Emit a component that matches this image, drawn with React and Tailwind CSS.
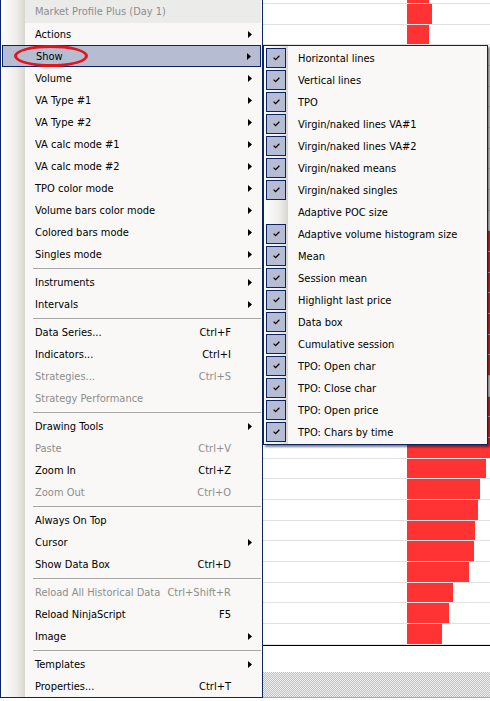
import React from 'react';

const mainItems = [
  { label: 'Actions', sub: true },
  { label: 'Show', sub: true, active: true },
  { label: 'Volume', sub: true },
  { label: 'VA Type #1', sub: true },
  { label: 'VA Type #2', sub: true },
  { label: 'VA calc mode #1', sub: true },
  { label: 'VA calc mode #2', sub: true },
  { label: 'TPO color mode', sub: true },
  { label: 'Volume bars color mode', sub: true },
  { label: 'Colored bars mode', sub: true },
  { label: 'Singles mode', sub: true },
  { sep: true },
  { label: 'Instruments', sub: true },
  { label: 'Intervals', sub: true },
  { sep: true },
  { label: 'Data Series...', key: 'Ctrl+F' },
  { label: 'Indicators...', key: 'Ctrl+I' },
  { label: 'Strategies...', key: 'Ctrl+S', off: true },
  { label: 'Strategy Performance', off: true },
  { sep: true },
  { label: 'Drawing Tools', sub: true },
  { label: 'Paste', key: 'Ctrl+V', off: true },
  { label: 'Zoom In', key: 'Ctrl+Z' },
  { label: 'Zoom Out', key: 'Ctrl+O', off: true },
  { sep: true },
  { label: 'Always On Top' },
  { label: 'Cursor', sub: true },
  { label: 'Show Data Box', key: 'Ctrl+D' },
  { sep: true },
  { label: 'Reload All Historical Data', key: 'Ctrl+Shift+R', off: true },
  { label: 'Reload NinjaScript', key: 'F5' },
  { label: 'Image', sub: true },
  { sep: true },
  { label: 'Templates', sub: true },
  { label: 'Properties...', key: 'Ctrl+T' },
];

const showItems = [
  'Horizontal lines',
  'Vertical lines',
  'TPO',
  'Virgin/naked lines VA#1',
  'Virgin/naked lines VA#2',
  'Virgin/naked means',
  'Virgin/naked singles',
  'Adaptive POC size',
  'Adaptive volume histogram size',
  'Mean',
  'Session mean',
  'Highlight last price',
  'Data box',
  'Cumulative session',
  'TPO: Open char',
  'TPO: Close char',
  'TPO: Open price',
  'TPO: Chars by time',
];

// bar lengths (px from x=407) for each price row of the profile
const bars = [25, 22, 50, 50, 50, 50, 50, 50, 50, 50, 50, 83, 83, 83, 83, 83, 83, 83, 60, 83, 83, 83, 79, 73, 71, 68, 67, 62, 46, 42, 35];

const Arrow = () => (
  <svg width="4" height="7" viewBox="0 0 4 7">
    <polygon points="0,0 4,3.5 0,7" fill="#000" />
  </svg>
);

const Check = () => (
  <svg width="7" height="6" viewBox="0 0 7 6">
    <path d="M0.6 2.6 L2.6 4.6 L6.4 0.8" fill="none" stroke="#000" strokeWidth="1.3" />
  </svg>
);

const Chart = () => (
  <div className="flex flex-col w-[490px]">
    <div className="h-[4px] border-b border-[#e2e2e2] flex">
      <div className="w-[407px]" />
      <div className="bg-[#ff3333] w-[22px]" />
    </div>
    {bars.map((w, i) => (
      <div key={i} className="h-[20.68px] border-b border-[#e2e2e2] flex last:border-b-0">
        <div className="w-[407px] shrink-0" />
        <div className="bg-[#ff3333] shrink-0" style={{ width: w }} />
      </div>
    ))}
    <div className="h-px bg-black" />
    <div className="h-[26px]" />
    <div className="h-[25px] bg-[image:repeating-conic-gradient(#c2c2c2_0%_25%,#eeeeee_0%_50%)] bg-[length:2px_2px]" />
    <div className="h-px bg-[#a8a8a8]" />
    <div className="flex-1 h-[4px] bg-[#d4d0c8]" />
  </div>
);

const MainMenu = () => (
  <div className="absolute left-0 top-0 w-[263px] border-x border-b border-[#0a246a] bg-[#f9f8f6] bg-[image:linear-gradient(to_right,#fdfdfd_0px,#efeeeb_15px,#d9d7d1_24px,#f9f8f6_24px)] flex flex-col">
    <div className="h-[23px] mx-px flex">
      <div className="ml-[23px] flex-1 bg-[#ebebea] flex items-center pl-[10px] text-[#8d8d8d]">
        Market Profile Plus (Day 1)
      </div>
    </div>
    {mainItems.map((it, i) =>
      it.sep ? (
        <div key={i} className="h-[6px] mx-px flex items-center">
          <div className="ml-[31px] flex-1 h-px bg-[#a6a6a6]" />
        </div>
      ) : (
        <div
          key={i}
          className={`h-[22px] mx-px flex items-center pl-[33px] ${
            it.active ? 'bg-[#b6bdd2] border border-[#0a246a] pl-[32px]' : ''
          } ${it.off ? 'text-[#8d8d8d]' : 'text-black'}`}
        >
          <span className="flex-1 whitespace-nowrap">{it.label}</span>
          {it.key && <span className="whitespace-nowrap">{it.key}</span>}
          <span className={`w-[30px] flex items-center pl-[17px] ${it.active ? 'w-[29px]' : ''}`}>
            {it.sub && <Arrow />}
          </span>
        </div>
      )
    )}
  </div>
);

const ShowMenu = () => (
  <div className="absolute left-[263px] top-[45px] w-[225px] border border-[#0a246a] p-px bg-[#f9f8f6] bg-[image:linear-gradient(to_right,#fdfdfd_0px,#efeeeb_15px,#d9d7d1_24px,#f9f8f6_24px)] shadow-[2px_2px_2px_rgba(0,0,0,0.5)] flex flex-col">
    {showItems.map((label, i) => (
      <div key={label} className="h-[22px] flex items-center">
        {i === 7 ? (
          <div className="w-5 h-5 ml-px" />
        ) : (
          <div className="w-5 h-5 ml-px border border-[#0a246a] bg-[#b6bdd2] flex items-center justify-center">
            <Check />
          </div>
        )}
        <span className="ml-[12px] whitespace-nowrap text-black">{label}</span>
      </div>
    ))}
  </div>
);

export default function App() {
  return (
    <div className="relative w-[490px] h-[701px] overflow-hidden bg-white text-[11px] leading-none [font-family:'DejaVu_Sans_Condensed','Liberation_Sans',sans-serif]">
      <Chart />
      <MainMenu />
      <ShowMenu />
      <div className="absolute left-[14px] top-[45px] w-[74px] h-[22px] rounded-[50%] border-[3px] border-[#e3141c]" />
    </div>
  );
}
